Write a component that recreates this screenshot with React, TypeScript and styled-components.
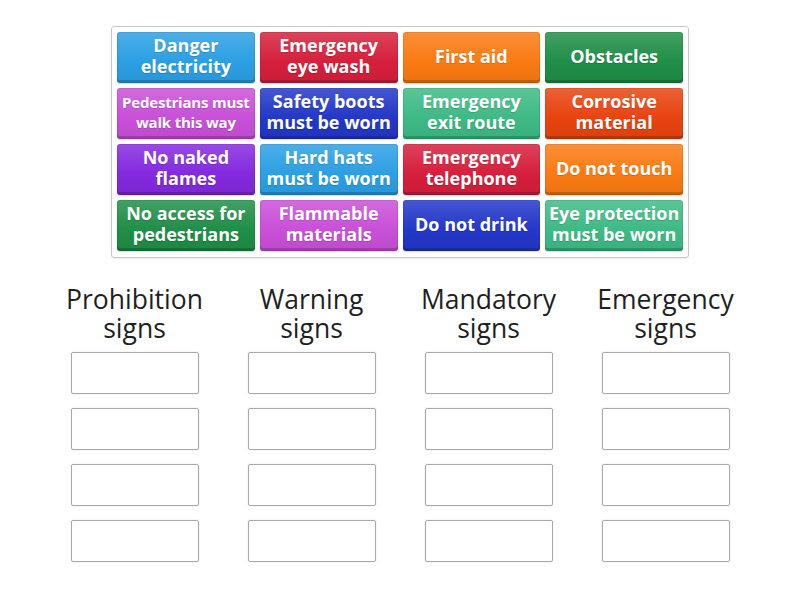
import styled, { createGlobalStyle } from "styled-components";

const GlobalStyle = createGlobalStyle`
  html, body {
    margin: 0;
    padding: 0;
    background: #ffffff;
    font-family: "Open Sans", "Liberation Sans", sans-serif;
  }
`;

type Tile = { label: string; color: string; small?: boolean };

const TILES: Tile[] = [
  { label: "Danger electricity", color: "#2b9fe3" },
  { label: "Emergency eye wash", color: "#d61f3c" },
  { label: "First aid", color: "#fa7a12" },
  { label: "Obstacles", color: "#1f8e47" },
  { label: "Pedestrians must walk this way", color: "#c94fd8", small: true },
  { label: "Safety boots must be worn", color: "#2337c9" },
  { label: "Emergency exit route", color: "#3dba85" },
  { label: "Corrosive material", color: "#e8430f" },
  { label: "No naked flames", color: "#8429df" },
  { label: "Hard hats must be worn", color: "#2b9fe3" },
  { label: "Emergency telephone", color: "#d61f3c" },
  { label: "Do not touch", color: "#fa7a12" },
  { label: "No access for pedestrians", color: "#1f8e47" },
  { label: "Flammable materials", color: "#c94fd8" },
  { label: "Do not drink", color: "#2337c9" },
  { label: "Eye protection must be worn", color: "#3dba85" },
];

const GROUPS = ["Prohibition signs", "Warning signs", "Mandatory signs", "Emergency signs"];

const App = () => {
  return (
    <Page>
      <GlobalStyle />
      <TileBoard>
        {TILES.map((t) => (
          <TileCard key={t.label} $color={t.color} $small={t.small}>
            <span>{t.label}</span>
          </TileCard>
        ))}
      </TileBoard>
      <Groups>
        {GROUPS.map((g) => (
          <Group key={g}>
            <GroupTitle>{g}</GroupTitle>
            <Slot />
            <Slot />
            <Slot />
            <Slot />
          </Group>
        ))}
      </Groups>
    </Page>
  );
};

const Page = styled.div`
  width: 800px;
  height: 600px;
  display: flex;
  flex-direction: column;
  align-items: center;
  padding-top: 26px;
  box-sizing: border-box;
`;

const TileBoard = styled.div`
  width: 578px;
  box-sizing: border-box;
  display: grid;
  grid-template-columns: repeat(4, 1fr);
  grid-auto-rows: 51px;
  gap: 5px;
  padding: 5px 5px 6px;
  border: 1px solid #c8c8c8;
  border-radius: 3px;
  box-shadow: 0 1px 2px rgba(0, 0, 0, 0.08);
`;

const TileCard = styled.div<{ $color: string; $small?: boolean }>`
  display: flex;
  align-items: center;
  justify-content: center;
  text-align: center;
  padding: 0 2px 3px;
  box-sizing: border-box;
  border-radius: 3px;
  background: linear-gradient(
      to bottom,
      rgba(255, 255, 255, 0.16) 0%,
      rgba(255, 255, 255, 0.08) 30%,
      rgba(0, 0, 0, 0) 60%,
      rgba(0, 0, 0, 0.06) 100%
    ),
    ${(p) => p.$color};
  box-shadow: inset 0 -3px 0 rgba(0, 0, 0, 0.18), inset 0 0 0 1px rgba(0, 0, 0, 0.08),
    0 1px 1px rgba(0, 0, 0, 0.15);
  color: #ffffff;
  font-family: "Open Sans", "Liberation Sans", sans-serif;
  font-weight: 700;
  font-size: ${(p) => (p.$small ? "15px" : "18px")};
  line-height: ${(p) => (p.$small ? "20px" : "21px")};
  letter-spacing: ${(p) => (p.$small ? "-0.2px" : "0")};
  text-shadow: 0 1px 1px rgba(0, 0, 0, 0.15);
`;

const Groups = styled.div`
  margin-top: 27px;
  display: grid;
  grid-template-columns: repeat(4, 177px);
`;

const Group = styled.div`
  display: flex;
  flex-direction: column;
  align-items: center;
  gap: 14px;
`;

const GroupTitle = styled.div`
  font-family: "Open Sans", "Liberation Sans", sans-serif;
  font-size: 26.5px;
  line-height: 29px;
  color: #1f1f1f;
  text-align: center;
  width: 150px;
  margin-bottom: -5px;
`;

const Slot = styled.div`
  width: 128px;
  height: 42px;
  box-sizing: border-box;
  border: 1px solid #a9a9a9;
  border-radius: 2px;
  background: #ffffff;
  box-shadow: 0 0 0 1px rgba(0, 0, 0, 0.03);
`;

export default App;
